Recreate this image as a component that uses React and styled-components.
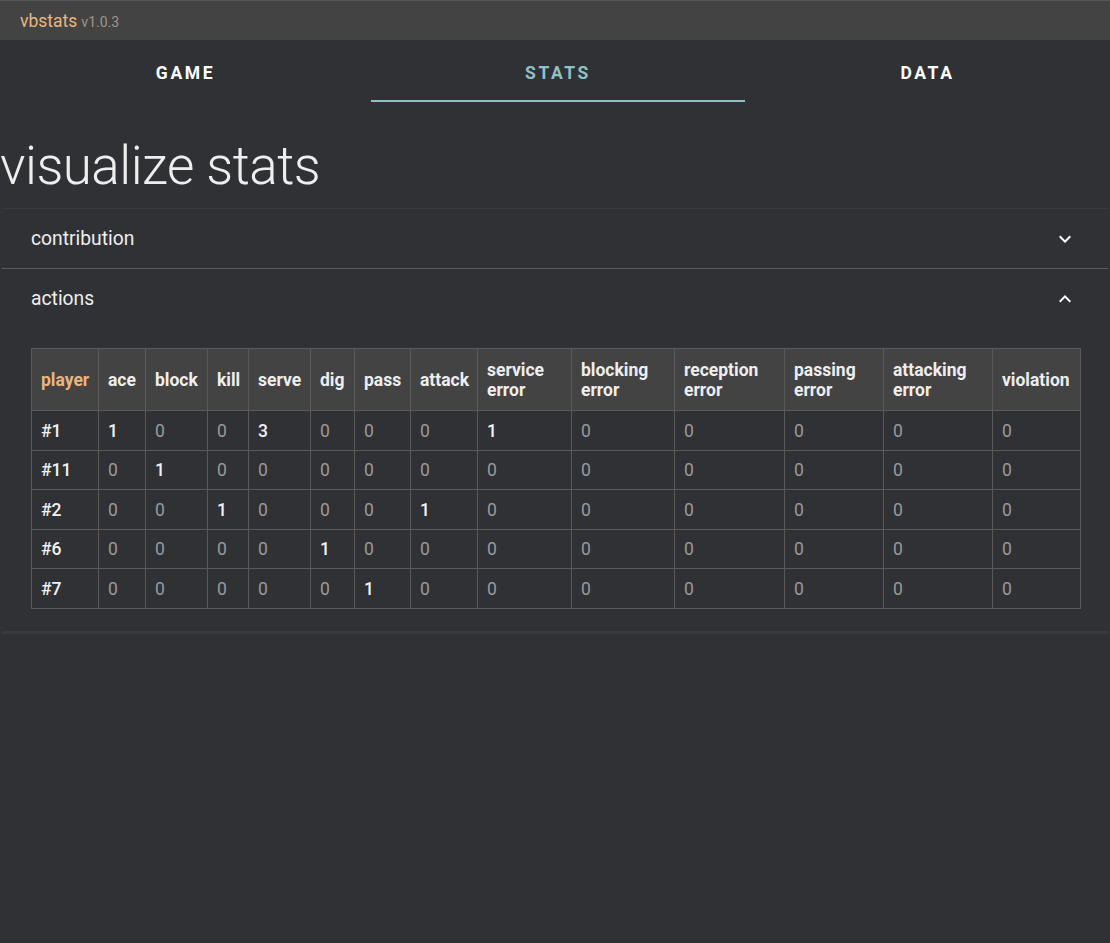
import styled, { createGlobalStyle } from "styled-components";
import { useState } from "react";

const GlobalStyle = createGlobalStyle`
  html, body {
    margin: 0;
    padding: 0;
    background: #303135;
    font-family: Roboto, "Liberation Sans", sans-serif;
    color: #eeeeee;
  }
`;

const columns = [
  { key: "player", label: "player", width: 67 },
  { key: "ace", label: "ace", width: 47 },
  { key: "block", label: "block", width: 62 },
  { key: "kill", label: "kill", width: 41 },
  { key: "serve", label: "serve", width: 62 },
  { key: "dig", label: "dig", width: 44 },
  { key: "pass", label: "pass", width: 56 },
  { key: "attack", label: "attack", width: 67 },
  { key: "serviceError", label: "service error", width: 94 },
  { key: "blockingError", label: "blocking error", width: 103 },
  { key: "receptionError", label: "reception error", width: 110 },
  { key: "passingError", label: "passing error", width: 99 },
  { key: "attackingError", label: "attacking error", width: 109 },
  { key: "violation", label: "violation", width: 88 },
];

const rows = [
  { player: "#1", ace: 1, serve: 3, serviceError: 1 },
  { player: "#11", block: 1 },
  { player: "#2", kill: 1, attack: 1 },
  { player: "#6", dig: 1 },
  { player: "#7", pass: 1 },
];

function Chevron({ up }) {
  return (
    <svg width="24" height="24" viewBox="0 0 24 24">
      <path
        d={up ? "M7.41 15.41 12 10.83l4.59 4.58L18 14l-6-6-6 6z" : "M7.41 8.59 12 13.17l4.59-4.58L18 10l-6 6-6-6z"}
        fill="#ffffff"
      />
    </svg>
  );
}

function App() {
  const [tab] = useState("stats");
  const [open, setOpen] = useState({ contribution: false, actions: true });

  const toggle = (name) => setOpen({ ...open, [name]: !open[name] });

  return (
    <Page>
      <GlobalStyle />
      <TopBar>
        <Brand>vbstats</Brand>
        <Version>v1.0.3</Version>
      </TopBar>
      <Tabs>
        <Tab active={tab === "game"}>GAME</Tab>
        <Tab active={tab === "stats"}>STATS</Tab>
        <Tab active={tab === "data"}>DATA</Tab>
      </Tabs>
      <Title>visualize stats</Title>
      <Panels>
        <PanelHeader onClick={() => toggle("contribution")}>
          <span>contribution</span>
          <Chevron up={open.contribution} />
        </PanelHeader>
        <Divider />
        <PanelHeader onClick={() => toggle("actions")}>
          <span>actions</span>
          <Chevron up={open.actions} />
        </PanelHeader>
        {open.actions && (
          <PanelBody>
            <Table>
              <colgroup>
                {columns.map((c) => (
                  <col key={c.key} style={{ width: c.width }} />
                ))}
              </colgroup>
              <thead>
                <tr>
                  {columns.map((c) => (
                    <Th key={c.key} player={c.key === "player"}>
                      {c.label}
                    </Th>
                  ))}
                </tr>
              </thead>
              <tbody>
                {rows.map((r) => (
                  <tr key={r.player}>
                    {columns.map((c) => {
                      if (c.key === "player") return <Td key={c.key} strong>{r.player}</Td>;
                      const v = r[c.key] || 0;
                      return (
                        <Td key={c.key} strong={v > 0}>
                          {v}
                        </Td>
                      );
                    })}
                  </tr>
                ))}
              </tbody>
            </Table>
          </PanelBody>
        )}
      </Panels>
    </Page>
  );
}

export default App;

const Page = styled.div`
  min-height: 943px;
  background: #303135;
`;

const TopBar = styled.header`
  height: 40px;
  display: flex;
  align-items: center;
  gap: 4px;
  padding-left: 20px;
  background: #434343;
  border-top: 1px solid #555555;
  box-sizing: border-box;
`;

const Brand = styled.span`
  font-size: 17.5px;
  color: #e8b67d;
`;

const Version = styled.span`
  font-size: 14px;
  color: #a0958a;
  margin-top: 2px;
`;

const Tabs = styled.nav`
  display: grid;
  grid-template-columns: 371px 374px 1fr;
  height: 62px;
`;

const Tab = styled.div`
  display: flex;
  align-items: center;
  justify-content: center;
  font-size: 17.5px;
  font-weight: 700;
  letter-spacing: 2.6px;
  color: ${(p) => (p.active ? "#8fc1c7" : "#ffffff")};
  border-bottom: 2px solid ${(p) => (p.active ? "#8fc1c7" : "transparent")};
  padding-top: 6px;
`;

const Title = styled.h1`
  margin: 0;
  padding: 36px 0 14px 0;
  font-size: 53px;
  font-weight: 300;
  line-height: 56px;
  color: #eeeeee;
  letter-spacing: -0.5px;
`;

const Panels = styled.section`
  margin: 0 2px;
  border-top: 1px solid #393a3e;
  border-bottom: 3px solid #393a3d;
  background: #303135;
`;

const PanelHeader = styled.div`
  height: 59px;
  display: flex;
  align-items: center;
  justify-content: space-between;
  padding: 0 31px 0 29px;
  font-size: 19.3px;
  color: #eeeeee;
  cursor: pointer;
`;

const Divider = styled.div`
  height: 1px;
  background: #5c5c5c;
`;

const PanelBody = styled.div`
  padding: 20px 28px 22px 29px;
`;

const Table = styled.table`
  border-collapse: collapse;
  width: 1049px;
  table-layout: fixed;
  border: 1px solid #5a5a5a;
`;

const Th = styled.th`
  height: 61px;
  text-align: left;
  padding: 0 9px;
  font-size: 17.5px;
  font-weight: 700;
  line-height: 20px;
  background: #434343;
  color: ${(p) => (p.player ? "#e8b67d" : "#eeeeee")};
  border: 1px solid #5a5a5a;
`;

const Td = styled.td`
  height: 37.5px;
  padding: 1px 9px 0 9px;
  font-size: 17.5px;
  font-weight: ${(p) => (p.strong ? 500 : 400)};
  color: ${(p) => (p.strong ? "#f2f2f2" : "#9a9a9a")};
  border: 1px solid #5a5a5a;
`;
